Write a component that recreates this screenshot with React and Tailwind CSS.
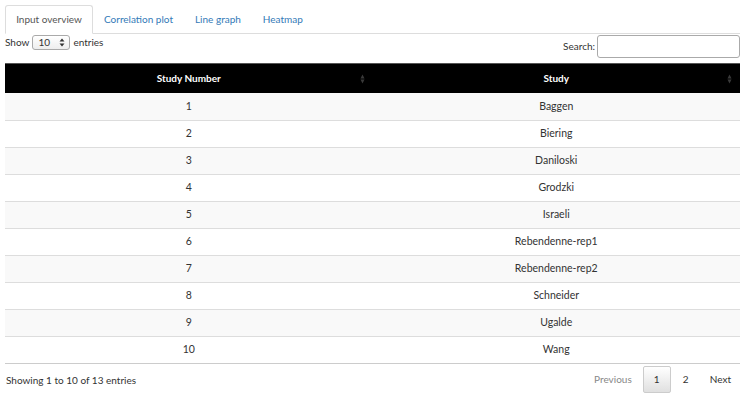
import React from "react";

const rows = [
  [1, "Baggen"],
  [2, "Biering"],
  [3, "Daniloski"],
  [4, "Grodzki"],
  [5, "Israeli"],
  [6, "Rebendenne-rep1"],
  [7, "Rebendenne-rep2"],
  [8, "Schneider"],
  [9, "Ugalde"],
  [10, "Wang"],
];

function SortIcon() {
  return (
    <svg width="5" height="10" viewBox="0 0 5 10" className="absolute right-[8px] top-1/2 -translate-y-1/2">
      <path d="M2.5 0.5 L4.5 4.5 L0.5 4.5 Z" fill="#3a3a3a" />
      <path d="M2.5 9.5 L4.5 5.5 L0.5 5.5 Z" fill="#3a3a3a" />
    </svg>
  );
}

export default function App() {
  return (
    <div className="w-[744px] h-[402px] bg-white text-[#333] text-[10px] overflow-hidden" style={{ fontFamily: "Lato, 'Open Sans', sans-serif" }}>
      <div className="pl-[5px] pr-[4px] pt-[5px]">
        <div className="flex border-b border-[#ddd] h-[29px]">
          <div className="w-[88px] whitespace-nowrap flex items-center justify-center bg-white border border-[#ddd] border-b-white -mb-px rounded-t-[3px] text-[#555]">Input overview</div>
          <div className="pl-[11px] pr-[10px] flex items-center text-[#337ab7] whitespace-nowrap">Correlation plot</div>
          <div className="pl-[12px] pr-[10px] flex items-center text-[#337ab7] whitespace-nowrap">Line graph</div>
          <div className="px-[12px] flex items-center text-[#337ab7] whitespace-nowrap">Heatmap</div>
        </div>
        <div className="flex justify-between items-start h-[29px]">
          <div className="flex items-center gap-[3px] pt-[1px]">
            <span>Show</span>
            <div className="relative w-[38px] h-[15px] border border-[#aaa] rounded-[3px] bg-gradient-to-b from-white to-[#eee] flex items-center pl-[5px] text-[10px]">
              10
              <svg width="6" height="9" viewBox="0 0 6 9" className="absolute right-[4px] top-[2px]">
                <path d="M3 0.5 L5.5 3.5 L0.5 3.5 Z" fill="#333" />
                <path d="M3 8.5 L5.5 5.5 L0.5 5.5 Z" fill="#333" />
              </svg>
            </div>
            <span>entries</span>
          </div>
          <div className="flex items-center gap-[2px] pt-[1px]">
            <span>Search:</span>
            <div className="w-[143px] h-[23px] border border-[#aaa] rounded-[3px] bg-white" />
          </div>
        </div>
        <div>
          <div className="grid grid-cols-2 bg-black text-white font-bold h-[30px] border-t border-[#555]">
            <div className="relative flex items-center justify-center">Study Number<SortIcon /></div>
            <div className="relative flex items-center justify-center">Study<SortIcon /></div>
          </div>
          {rows.map(([n, s], i) => (
            <div key={n} className={`grid grid-cols-2 h-[27px] items-center text-[10.5px] ${i % 2 === 0 ? "bg-[#f9f9f9]" : "bg-white"} ${i === 0 ? "" : "border-t border-[#ddd]"}`}>
              <div className="text-center">{n}</div>
              <div className="text-center">{s}</div>
            </div>
          ))}
          <div className="border-t border-[#ccc]" />
          <div className="flex justify-between items-center h-[31px]">
            <span className="pl-[1px] pt-[2px]">Showing 1 to 10 of 13 entries</span>
            <div className="flex items-center text-[10px]">
              <span className="px-[11px] text-[#888]">Previous</span>
              <span className="w-[28px] h-[27px] flex items-center justify-center border border-[#ccc] rounded-[2px] bg-gradient-to-b from-white to-[#e0e0e0]">1</span>
              <span className="w-[30px] text-center">2</span>
              <span className="px-[9px]">Next</span>
            </div>
          </div>
        </div>
      </div>
    </div>
  );
}
